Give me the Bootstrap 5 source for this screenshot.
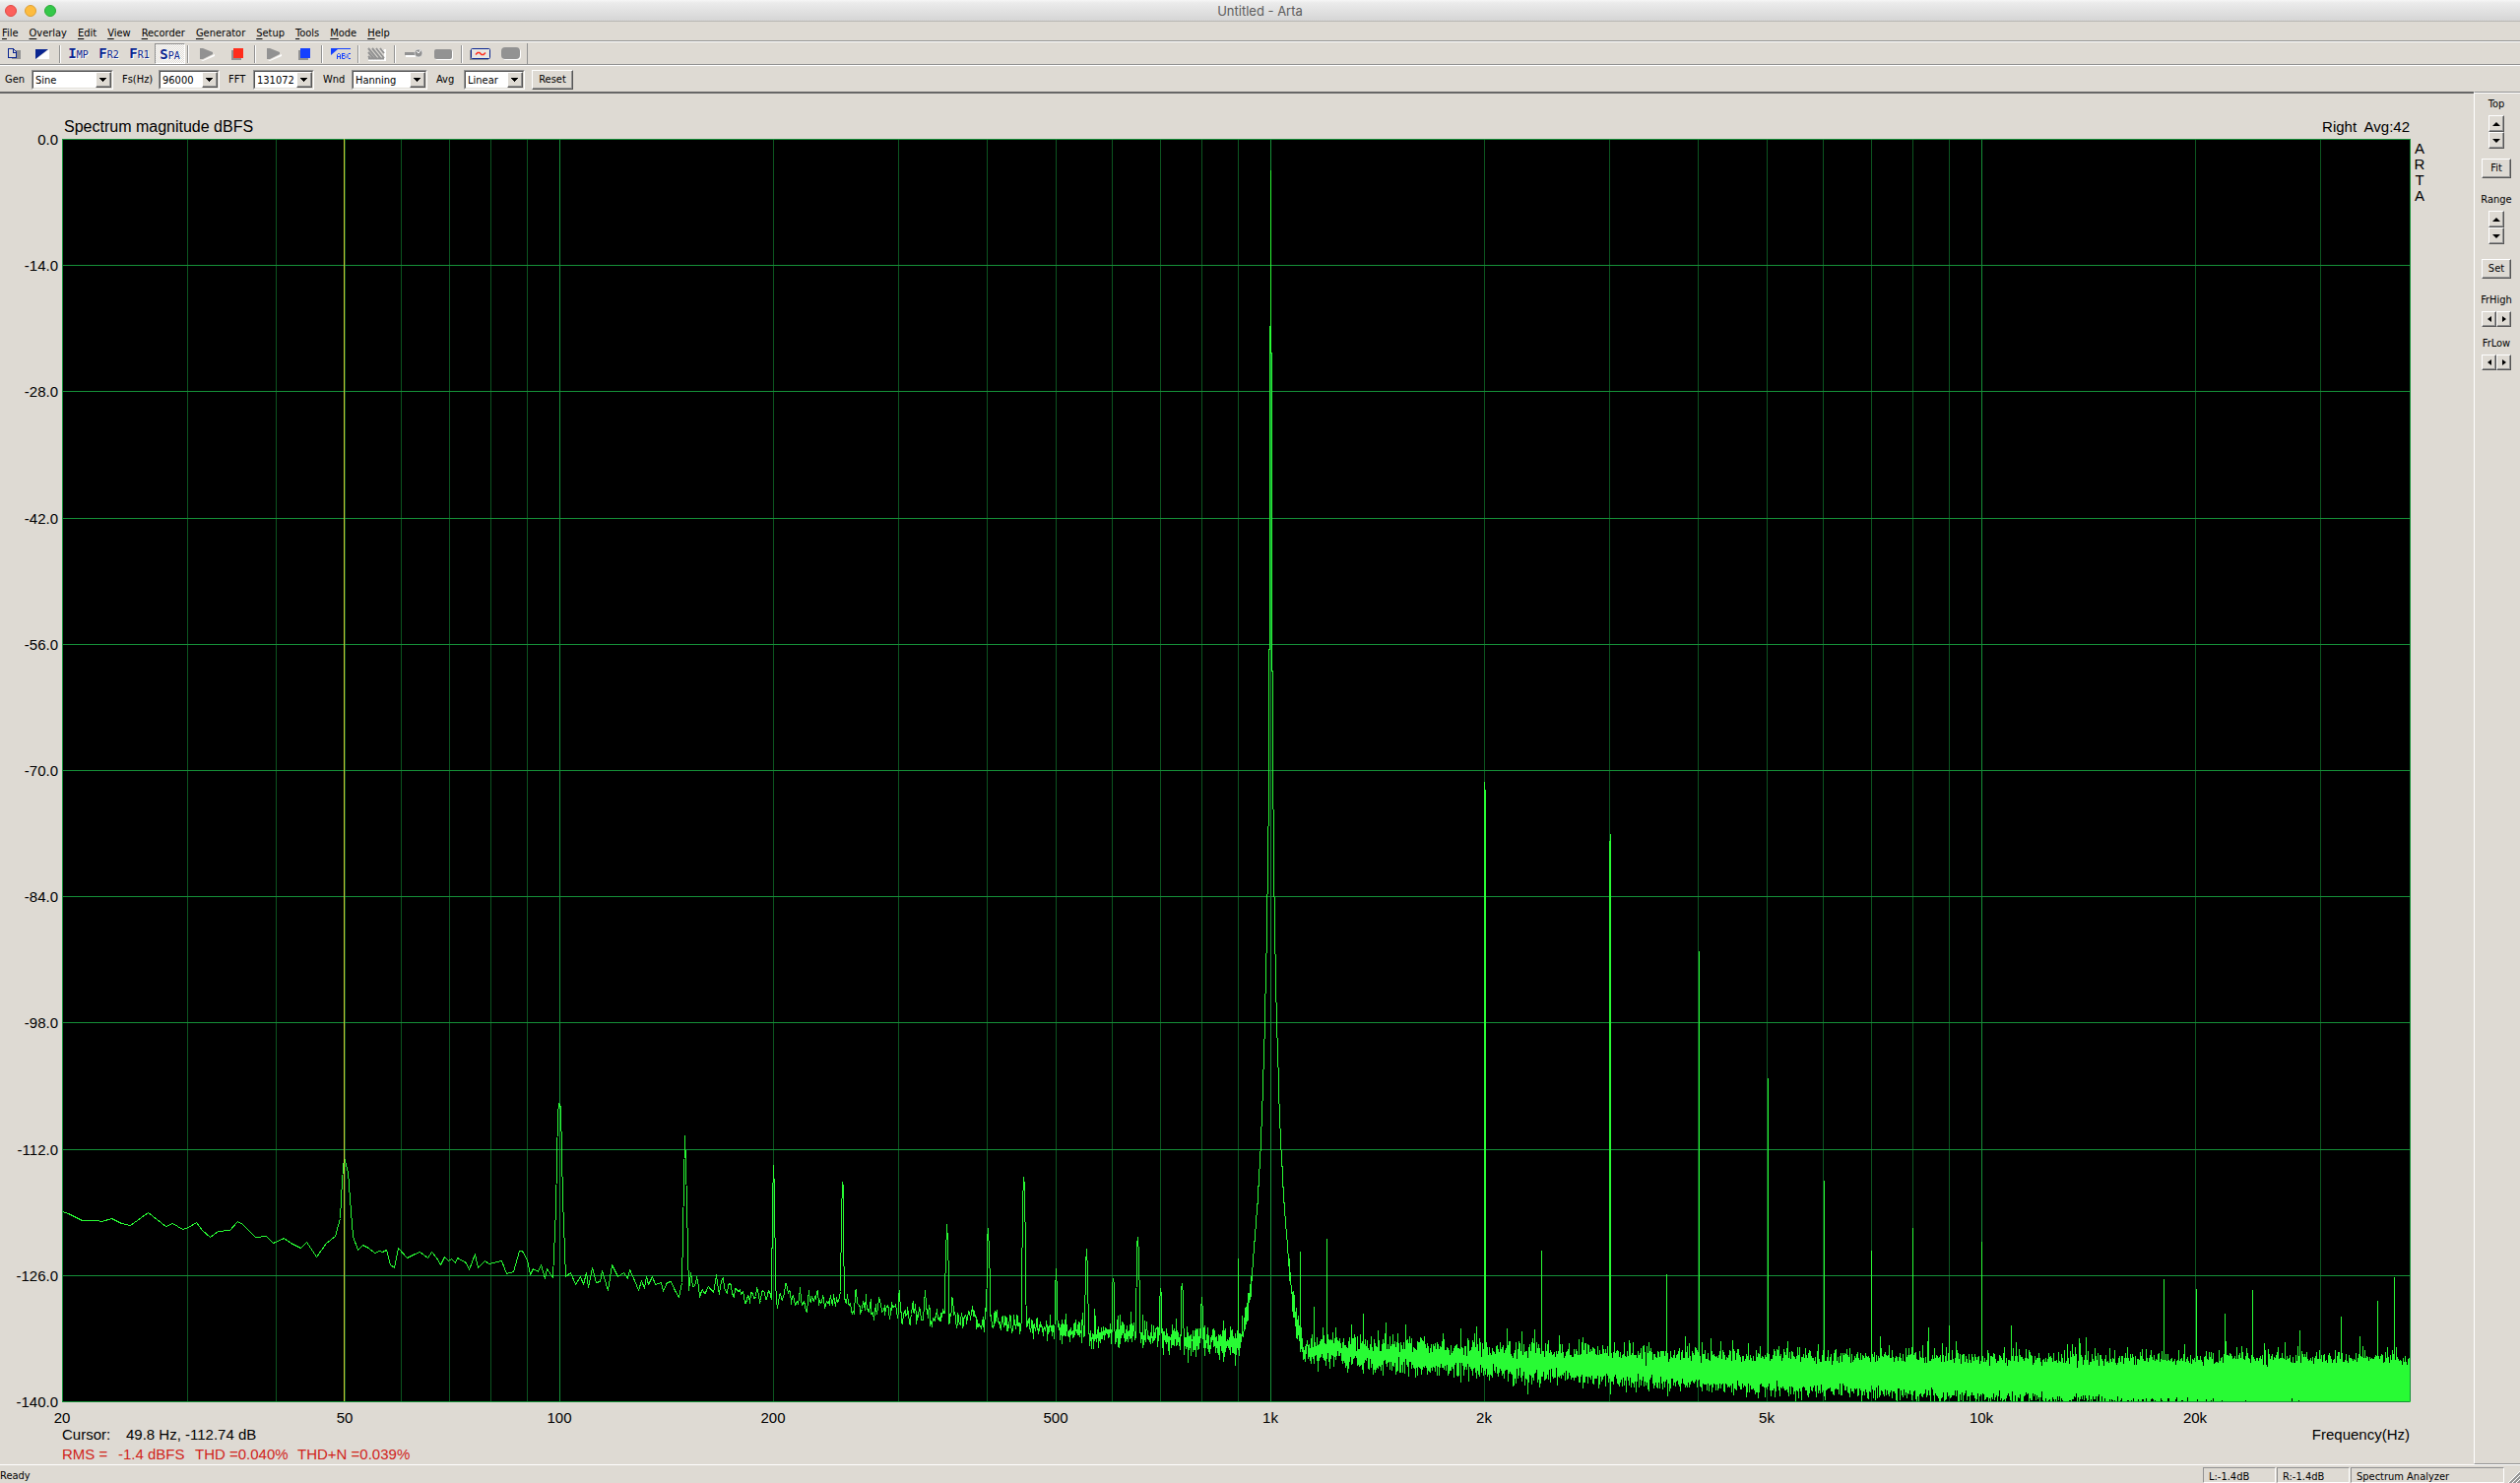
<!DOCTYPE html>
<html lang="en">
<head>
<meta charset="utf-8">
<meta name="viewport" content="width=device-width, initial-scale=1">
<title>Untitled - Arta</title>
<link href="https://cdn.jsdelivr.net/npm/bootstrap@5.3.0/dist/css/bootstrap.min.css" rel="stylesheet">
<script src="https://cdn.jsdelivr.net/npm/bootstrap@5.3.0/dist/js/bootstrap.bundle.min.js"></script>
<style>
:root{--face:#dedad3;--dim:#929292;--dark:#555;--ink:#000}
body{background:var(--face);color:var(--ink);font:11px/14px "DejaVu Sans Condensed","Noto Sans",sans-serif;overflow:hidden}
.titlebar{height:22px;background:linear-gradient(#f6f6f6 0,#ebebeb 3px,#d5d5d5);border-bottom:1px solid #b9b7b3;padding:0 5px;position:relative}
.titlebar h1{font:13px/22px Inter,sans-serif;color:#5c5c5c;margin:0}
.lights{position:absolute;left:5px;top:5px;gap:8px}
.light{width:12px;height:12px;border-radius:50%;border:1px solid}
.l-red{background:#fc605c;border-color:#e04944}.l-amber{background:#fdbc40;border-color:#dea034}.l-green{background:#34c84a;border-color:#2aaa37}
.menubar{height:19px;padding-left:2px;gap:11px}
.menubar a{color:#000;text-decoration:none;line-height:19px;padding-top:2px}
.menubar u{text-underline-offset:2px}
.tools{height:24px;border-top:1px solid var(--dim);box-shadow:inset 0 1px #fff;padding-top:2px}
.tool{width:31px;border:0;background:none;padding:0;height:21px;color:#0a2590;font:10px/20px "DejaVu Sans Mono",monospace;text-shadow:1px 1px #fff}
.tool.narrow{width:27px}
.tool b{font-size:14px}
.tool svg{display:block;margin:auto}
.tool.down{border:1px solid;border-color:var(--dim) #fff #fff var(--dim);background:repeating-conic-gradient(#fff 0 25%,#dedad3 0 50%) 0 0/2px 2px}
.vsep{width:6px;height:18px;margin-top:2px;background:linear-gradient(90deg,transparent 2px,var(--dim) 2px 3px,#fff 3px 4px,transparent 4px)}
.vend{width:1px;background:var(--dim);margin-left:1px}
.params{display:grid;grid-template-columns:32px 83px 46px 62px 34px 62px 38px 77px 37px 62px auto;justify-content:start;height:28px;border-top:1px solid var(--dim);box-shadow:inset 0 1px #fff;padding-top:5px}
.params label{padding-left:9px;line-height:20px}
.params label:first-child{padding-left:5px}
.drop{position:relative;height:20px;border:1px solid;border-color:var(--dim) #fff #fff var(--dim)}
.drop select{appearance:none;width:100%;height:18px;border:1px solid;border-color:var(--dark) var(--face) var(--face) var(--dark);border-radius:0;background:#fff;color:#000;padding:0 0 0 2px;line-height:15px;display:block}
.drop::after{content:"";position:absolute;right:1px;top:1px;width:16px;height:16px;border:1px solid;border-color:#fff var(--dark) var(--dark) #fff;box-shadow:inset -1px -1px var(--dim);background:conic-gradient(from -45deg at 50% 100%,#000 90deg,transparent 0) 3px 5px/7px 4px no-repeat,var(--face);background:linear-gradient(#000,#000) 3px 5px/7px 1px no-repeat,linear-gradient(#000,#000) 4px 6px/5px 1px no-repeat,linear-gradient(#000,#000) 5px 7px/3px 1px no-repeat,linear-gradient(#000,#000) 6px 8px/1px 1px no-repeat,var(--face);pointer-events:none}
.key3d{border:1px solid;border-color:#fff var(--dark) var(--dark) #fff;box-shadow:inset -1px -1px var(--dim);background:var(--face);border-radius:0;padding:0;font-size:11px;line-height:16px;color:#000;display:block}
.reset{width:42px;height:20px;margin-left:7px}
.work{min-height:0}
.scope{border-top:2px solid #666;min-width:0}
.scope svg{display:block;width:100%;height:100%}
.side{width:47px;border-left:1px solid #fff;border-top:1px solid var(--dim);border-bottom:1px solid var(--dim);box-shadow:inset 0 1px #fff;padding:5px 2px 0 0}
.side .cap{line-height:14px}
.side svg{display:block;margin:auto}
.spin{width:16px;height:17px}.spin.side-way{width:15px;height:16px}
.wide{width:30px;height:20px}
.gap-s{margin-top:10px}.gap-l{margin-top:15px}
.statusbar{height:19px;border-top:1px solid #fff;padding-top:2px;line-height:17px}
.pane{height:16px;border:1px solid;border-color:var(--dim) #fff #fff var(--dim);padding-left:5px;width:74px;margin-right:1px}
.pane.long{width:156px}
.ax{font:15px "Liberation Sans",Arial,sans-serif}
.ax.big{font-size:16px}
</style>
</head>
<body class="vh-100 d-flex flex-column">
<header class="titlebar d-flex justify-content-center">
  <div class="lights d-flex"><span class="light l-red"></span><span class="light l-amber"></span><span class="light l-green"></span></div>
  <h1>Untitled - Arta</h1>
</header>
<nav class="menubar d-flex">
  <a href="#"><u>F</u>ile</a><a href="#"><u>O</u>verlay</a><a href="#"><u>E</u>dit</a><a href="#"><u>V</u>iew</a><a href="#"><u>R</u>ecorder</a><a href="#"><u>G</u>enerator</a><a href="#"><u>S</u>etup</a><a href="#"><u>T</u>ools</a><a href="#"><u>M</u>ode</a><a href="#"><u>H</u>elp</a>
</nav>
<div class="tools d-flex" role="toolbar">
  <button class="tool narrow" aria-label="Copy"><svg width="14" height="13" shape-rendering="crispEdges"><path d="M5 3h9v9H5z" fill="#929292"/><path d="M1.500 1.500h5l3 3v6h-8z" fill="#dedad3" stroke="#0a2590"/><path d="M6.500 1v4h3" fill="none" stroke="#0a2590"/></svg></button>
  <button class="tool" aria-label="Colors"><svg width="14" height="10"><path d="M0 0h13L0 10z" fill="#0a2590"/><path d="M14 0v10H1z" fill="#fff"/></svg></button>
  <span class="vsep"></span>
  <button class="tool"><b>I</b>MP</button><button class="tool"><b>F</b>R2</button><button class="tool"><b>F</b>R1</button><button class="tool down"><b>S</b>PA</button>
  <span class="vsep"></span>
  <button class="tool" aria-label="Play"><svg width="16" height="14"><path d="M2 13h2l12-6v2L4 14z" fill="#fff"/><path d="M1 1h3l10 4v2L4 12H1z" fill="#929292"/></svg></button>
  <button class="tool" aria-label="Stop"><svg width="14" height="12"><path d="M1 2h10v10H1z" fill="#929292"/><path d="M3 0h10v10H3z" fill="#ff2d1c"/></svg></button>
  <span class="vsep"></span>
  <button class="tool" aria-label="Generate"><svg width="16" height="14"><path d="M2 13h2l12-6v2L4 14z" fill="#fff"/><path d="M1 1h3l10 4v2L4 12H1z" fill="#929292"/></svg></button>
  <button class="tool" aria-label="Stop generator"><svg width="14" height="12"><path d="M1 2h10v10H1z" fill="#929292"/><path d="M3 0h10v10H3z" fill="#1440ff"/></svg></button>
  <span class="vsep"></span>
  <button class="tool" aria-label="Labels"><svg width="22" height="13"><path d="M1 1h20v1H8L1 8z" fill="#1440ff"/><path d="M7.500 12V7.500l1-1h1l1 1V12M7.500 9.500h3M12.500 6v5.500h2.500l1-1v-1l-1-1h-2.500M13 6.500h2l1 1M21 6.500h-2l-1 1v3l1 1h2" fill="none" stroke="#1440ff"/></svg></button>
  <span class="vsep"></span>
  <button class="tool" aria-label="Overlay"><svg width="19" height="14"><path d="M2 2l8 10M6 2l8 10M10 2l7 9M14 2l4 4" stroke="#fff" stroke-width="2"/><path d="M1 13h18M18 2v11" stroke="#fff" stroke-width="2"/><path d="M1 1l9 11M5 1l9 11M9 1l8 10M13 1l4 5M1 5l6 7M1 9l3 3M1 11.500h16" stroke="#929292" stroke-width="2"/></svg></button>
  <span class="vsep"></span>
  <button class="tool" aria-label="Key"><svg width="20" height="11"><path d="M2 7h10v2H2z" fill="#fff"/><path d="M1 4h11v3H1z" fill="#929292"/><circle cx="15" cy="5" r="4" fill="#929292" stroke="#fff" stroke-width=".5"/><path d="M13 3l2 2 2-3" fill="none" stroke="#fff"/></svg></button>
  <button class="tool" aria-label="Record"><svg width="19" height="12"><rect x="1" y="2" width="18" height="10" rx="2" fill="#fff"/><rect y="1" width="18" height="10" rx="2" fill="#929292"/></svg></button>
  <span class="vsep"></span>
  <button class="tool" aria-label="Signal"><svg width="23" height="13"><path d="M1 3h2v8h17v2H1z" fill="#929292"/><rect x="2.500" y="1.500" width="19" height="10" rx="1" fill="#e8e6e1" stroke="#0a2590"/><path d="M7 7.500l2-2h2l2 2h2l2-2" fill="none" stroke="#ff2d1c" stroke-width="1.500"/></svg></button>
  <button class="tool" aria-label="Level"><svg width="20" height="13"><rect x="1" y="1" width="19" height="12" rx="4" fill="#fff"/><rect width="19" height="12" rx="4" fill="#929292"/></svg></button>
  <span class="vend"></span>
</div>
<form class="params">
  <label for="gen">Gen</label><span class="drop"><select id="gen"><option>Sine</option></select></span>
  <label for="fs">Fs(Hz)</label><span class="drop"><select id="fs"><option>96000</option></select></span>
  <label for="fft">FFT</label><span class="drop"><select id="fft"><option>131072</option></select></span>
  <label for="wnd">Wnd</label><span class="drop"><select id="wnd"><option>Hanning</option></select></span>
  <label for="avg">Avg</label><span class="drop"><select id="avg"><option>Linear</option></select></span>
  <button type="button" class="key3d reset">Reset</button>
</form>
<main class="work d-flex flex-grow-1">
  <section class="scope flex-grow-1" id="scope"></section>
  <aside class="side d-flex flex-column align-items-center">
    <span class="cap">Top</span>
    <button class="key3d spin mt-1" aria-label="Top up"><svg width="8" height="4"><path d="M4 0l4 4H0z"/></svg></button>
    <button class="key3d spin" aria-label="Top down"><svg width="8" height="4"><path d="M0 0h8L4 4z"/></svg></button>
    <button class="key3d wide gap-s">Fit</button>
    <span class="cap gap-l">Range</span>
    <button class="key3d spin mt-1" aria-label="Range up"><svg width="8" height="4"><path d="M4 0l4 4H0z"/></svg></button>
    <button class="key3d spin" aria-label="Range down"><svg width="8" height="4"><path d="M0 0h8L4 4z"/></svg></button>
    <button class="key3d wide gap-l">Set</button>
    <span class="cap gap-l">FrHigh</span>
    <div class="d-flex mt-1"><button class="key3d spin side-way" aria-label="High down"><svg width="4" height="6"><path d="M4 0v6L0 3z"/></svg></button><button class="key3d spin side-way" aria-label="High up"><svg width="4" height="6"><path d="M0 0l4 3-4 3z"/></svg></button></div>
    <span class="cap gap-s">FrLow</span>
    <div class="d-flex mt-1"><button class="key3d spin side-way" aria-label="Low down"><svg width="4" height="6"><path d="M4 0v6L0 3z"/></svg></button><button class="key3d spin side-way" aria-label="Low up"><svg width="4" height="6"><path d="M0 0l4 3-4 3z"/></svg></button></div>
  </aside>
</main>
<footer class="statusbar d-flex">
  <span class="flex-grow-1">Ready</span>
  <span class="pane">L:-1.4dB</span><span class="pane">R:-1.4dB</span><span class="pane long">Spectrum Analyzer</span>
  <svg width="15" height="16" class="align-self-end" stroke="#929292" stroke-width="2"><path d="M4 17L16 5M8 17l8-8M12 17l4-4"/><path d="M3 16L15 4M7 16l8-8M11 16l4-4" stroke="#fff" stroke-width="1"/></svg>
</footer>
<script>
// Spectrum in chart units: 2384 wide (20 Hz to 40 kHz, log), 1282 high (0 to -140 dB).
const W0=2384,H0=1282,DEC=722;
const fx=f=>Math.log10(f/20)*DEC;
const low=[0,1089,6,1091,20,1098,34,1098,40,1099,50,1096,60,1101,69,1103,87,1090,105,1104,112,1101,122,1107,128,1105,136,1100,142,1108,150,1115,158,1109,170,1108,178,1099,183,1102,196,1115,207,1114,214,1121,225,1116,232,1121,242,1126,248,1120,258,1135,268,1121,277,1114,282,1096,284,1057,286,1034,290,1049,293,1089,295,1114,300,1128,305,1123,311,1126,317,1131,322,1129,325,1130,329,1128,333,1143,337,1146,341,1126,350,1136,358,1132,363,1130,371,1136,375,1130,380,1136,384,1143,388,1135,392,1139,395,1137,399,1141,401,1136,410,1141,413,1148,419,1132,422,1146,429,1139,433,1142,446,1139,451,1152,458,1150,464,1129,467,1129,472,1138,475,1153,478,1147,483,1150,486,1143,490,1157,492,1147,498,1156,501,1086,503,990,504,979,505,980,506,984,508,1076,511,1155,516,1151,521,1163,526,1155,529,1163,532,1151,534,1166,538,1146,542,1161,546,1160,548,1149,554,1169,558,1143,564,1155,570,1151,574,1157,576,1148,581,1159,585,1169,588,1159,591,1167,593,1155,595,1163,599,1155,602,1163,608,1161,610,1170,614,1161,618,1160,622,1169,626,1176,629,1161,631,1060,632,1012,633,1040,636,1169];
const wideSpikes=[722,1042,792,1056,850,1168,898,1101,940,1105,976,1054,1009,1146,1040,1126,1067,1156,1092,1114,1115,1166,1137,1161,1157,1175];
const thinSpikes=[1194,1136,1257,1129,1271,1185,1284,1116,1309,1203,1321,1192,1344,1201,1364,1203,1402,1212,1420,1207,1436,1205,1444,652,1445,660,1467,1207,1482,1210,1495,1208,1502,1128,1520,1214,1544,1216,1571,712,1572,705,1592,1222,1611,1221,1629,1152,1662,824,1712,1222,1732,953,1752,1223,1789,1057,1837,1128,1846,1215,1879,1105,1889,1224,1894,1220,1895,1206,1916,1204,1949,1119,1955,1229,1979,1204,2036,1223,2041,1223,2055,1216,2064,1227,2134,1157,2167,1167,2196,1192,2197,1220,2224,1168,2236,1222,2257,1221,2272,1209,2314,1195,2333,1215,2351,1179,2368,1155];
const floorPts=[630,1164,720,1176,850,1190,940,1199,1012,1210,1100,1215,1190,1224,1264,1228,1353,1236,1443,1240,1559,1246,1693,1251,1827,1255,1949,1258,2100,1261,2384,1265];
const skirtPts=[0,19,.6,210,1.4,500,1.6,570,2.5,690,3.5,765,4.5,830,5.5,872,6.5,912,7.5,945,8.5,979,9.5,1006,10.5,1026,11.5,1045,13.500,1082,15.500,1105,19,1151,22,1180,26,1202,30,1218,40,1300];
function lerp(p,x){for(let i=2;i<p.length;i+=2)if(x<=p[i])return p[i-1]+(p[i+1]-p[i-1])*(x-p[i-2])/(p[i]-p[i-2]);return p[p.length-1];}
let seed=20117;
const rnd=()=>{seed=(seed*1664525+1013904223)>>>0;return (seed+1)/4294967297;};
const gauss=()=>Math.sqrt(-2*Math.log(rnd()))*Math.cos(6.2832*rnd());
function spectrum(){
  const pts=low.slice(),step=96000/131072,cols=new Map();let prev=0;
  for(let k=Math.ceil(20*Math.pow(10,637/DEC)/step);;k++){
    const x=fx(k*step);if(x>=W0)break;
    const g=gauss(),n=x<1000?g*.8+prev*.5:g;prev=g;
    const s=x<1000?6:x<1300?7:8+(x-1300)*.0013;
    let v=-n*s;if(v<0)v*=1.12;
    if(rnd()<.0008&&x>1250)v-=10+rnd()*10;
    let y=lerp(floorPts,x)+v;
    const d0=Math.abs(x-1227);
    y=Math.min(y,lerp(skirtPts,d0)+(d0>18?gauss()*8:0));
    for(let i=0;i<wideSpikes.length;i+=2){const d=Math.abs(x-wideSpikes[i]);if(d<3)y=Math.min(y,wideSpikes[i+1]+d*d*24);}
    const c=Math.round(x);(cols.get(c)||cols.set(c,[]).get(c)).push(Math.min(H0,y));
  }
  for(let i=0;i<thinSpikes.length;i+=2)cols.get(thinSpikes[i])?.splice(1,0,thinSpikes[i+1]);
  for(const [c,a] of cols){
    if(a.length>1)pts.push(c,a[0],c,Math.min(...a),c,Math.max(...a),c,a[a.length-1]);
    else pts.push(c,a[0]);
  }
  return pts;
}
const trace=spectrum();
function draw(){
  const box=document.getElementById('scope'),w=box.clientWidth,h=box.clientHeight;
  const L=63,T=46,pw=w-L-65,ph=h-T-64,sx=pw/W0,sy=ph/H0;
  const X=v=>Math.round(L+v*sx)+.5,Y=v=>Math.round(T+v*sy)+.5;
  let s=`<rect x="${L}" y="${T}" width="${pw}" height="${ph}" fill="#000"/><g shape-rendering="crispEdges" fill="none">`;
  const v=(x,c)=>`<path d="M${X(x)} ${T}V${T+ph}" stroke="${c}"/>`;
  for(const f of [30,40,50,60,70,80,90,200,300,400,500,600,700,800,900,2e3,3e3,4e3,5e3,6e3,7e3,8e3,9e3,2e4,3e4])s+=v(fx(f),'#0c5520');
  for(const f of [100,1e3,1e4])s+=v(fx(f),'#159038');
  for(let i=0;i<=10;i++)s+=`<path d="M${L} ${Y(i*H0/10)}H${L+pw}" stroke="#159038"/>`;
  let d='';for(let i=0;i<trace.length;i+=2)d+=(i?'L':'M')+X(trace[i])+' '+Y(trace[i+1]);
  s+=`<path d="${d}" stroke="#28fb34" stroke-linejoin="bevel"/>`+v(286,'#c8c832')+v(0,'#159038')+v(W0,'#159038')+`<path d="M${L} ${Y(H0)}H${L+pw}" stroke="#159038"/></g>`;
  const t=(x,y,str,a='start',cls='ax',fill='#000')=>`<text x="${x}" y="${y}" class="${cls}" text-anchor="${a}" fill="${fill}" xml:space="preserve">${str}</text>`;
  for(let i=0;i<=10;i++)s+=t(L-4,Math.round(T+i*ph/10)+6,(i?'-'+14*i:'0')+'.0','end');
  for(const [f,n] of [[20,'20'],[50,'50'],[100,'100'],[200,'200'],[500,'500'],[1e3,'1k'],[2e3,'2k'],[5e3,'5k'],[1e4,'10k'],[2e4,'20k']])s+=t(Math.round(L+fx(f)*sx),T+ph+22,n,'middle');
  const b=T+ph;
  s+=t(L+2,T-7,'Spectrum magnitude dBFS','start','ax big')+t(L+pw,T-7,'Right  Avg:42','end');
  [...'ARTA'].forEach((c,i)=>s+=t(L+pw+10,T+15+i*16,c,'middle'));
  s+=t(L+pw,b+39,'Frequency(Hz)','end')+t(L,b+39,'Cursor:')+t(L+65,b+39,'49.8 Hz, -112.74 dB');
  s+=t(L,b+59,'RMS =','start','ax','#d0221a')+t(L+57,b+59,'-1.4 dBFS','start','ax','#d0221a')+t(L+135,b+59,'THD =0.040%','start','ax','#d0221a')+t(L+239,b+59,'THD+N =0.039%','start','ax','#d0221a');
  box.innerHTML=`<svg viewBox="0 0 ${w} ${h}" role="img" aria-label="Spectrum magnitude">${s}</svg>`;
}
draw();addEventListener('resize',draw);
</script>
</body>
</html>
